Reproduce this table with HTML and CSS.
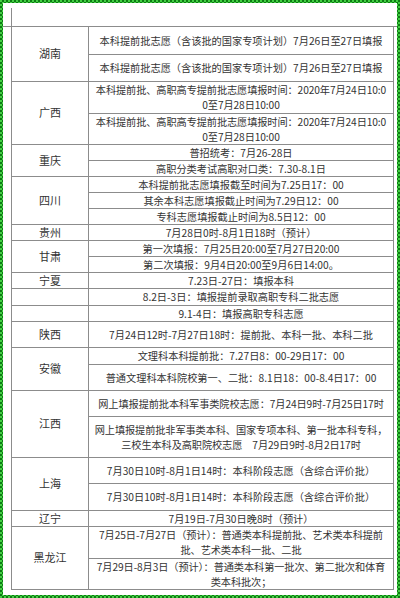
FILE: index.html
```html
<!DOCTYPE html>
<html lang="zh-CN">
<head>
<meta charset="utf-8">
<title>2020各省志愿填报时间</title>
<link rel="stylesheet" href="styles.css">
</head>
<body>
<div class="frame">
  <div class="page">
    <div class="stub"></div>
    <div class="rule"></div>
    <table class="grid">
      <colgroup><col class="c1"><col class="c2"></colgroup>
      <tbody>
        <tr class="h27"><td rowspan="2" class="prov">湖南</td><td>本科提前批志愿（含该批的国家专项计划）7月26日至27日填报</td></tr>
        <tr class="h27"><td>本科提前批志愿（含该批的国家专项计划）7月26日至27日填报</td></tr>
        <tr class="h32"><td rowspan="2" class="prov">广西</td><td class="nw">本科提前批、高职高专提前批志愿填报时间：2020年7月24日10:0<br>0至7月28日10:00</td></tr>
        <tr class="h31"><td class="nw">本科提前批、高职高专提前批志愿填报时间：2020年7月24日10:0<br>0至7月28日10:00</td></tr>
        <tr class="h16"><td rowspan="2" class="prov">重庆</td><td>普招统考：7月26-28日</td></tr>
        <tr class="h16"><td>高职分类考试高职对口类：7.30-8.1日</td></tr>
        <tr class="h16"><td rowspan="3" class="prov">四川</td><td>本科提前批志愿填报截至时间为7.25日17：00</td></tr>
        <tr class="h16"><td>其余本科志愿填报截止时间为7.29日12：00</td></tr>
        <tr class="h16"><td>专科志愿填报截止时间为8.5日12：00</td></tr>
        <tr class="h16"><td class="prov">贵州</td><td>7月28日0时-8月1日18时（预计）</td></tr>
        <tr class="h16"><td rowspan="2" class="prov">甘肃</td><td>第一次填报：7月25日20:00至7月27日20:00</td></tr>
        <tr class="h16"><td>第二次填报：9月4日20:00至9月6日14:00。</td></tr>
        <tr class="h16"><td class="prov">宁夏</td><td>7.23日-27日：填报本科</td></tr>
        <tr class="h17"><td class="prov"></td><td>8.2日-3日：填报提前录取高职专科二批志愿</td></tr>
        <tr class="h16"><td class="prov"></td><td>9.1-4日：填报高职专科志愿</td></tr>
        <tr class="h26"><td class="prov">陕西</td><td>7月24日12时-7月27日18时：提前批、本科一批、本科二批</td></tr>
        <tr class="h17"><td rowspan="2" class="prov">安徽</td><td>文理科本科提前批：7.27日8：00-29日17：00</td></tr>
        <tr class="h26"><td>普通文理科本科院校第一、二批：8.1日18：00-8.4日17：00</td></tr>
        <tr class="h26"><td rowspan="2" class="prov">江西</td><td class="nw">网上填报提前批本科军事类院校志愿：7月24日9时-7月25日17时</td></tr>
        <tr class="h41"><td class="nw">网上填报提前批非军事类本科、国家专项本科、第一批本科专科，<br>三校生本科及高职院校志愿　7月29日9时-8月2日17时</td></tr>
        <tr class="h26"><td rowspan="2" class="prov">上海</td><td>7月30日10时-8月1日14时：本科阶段志愿（含综合评价批）</td></tr>
        <tr class="h27"><td>7月30日10时-8月1日14时：本科阶段志愿（含综合评价批）</td></tr>
        <tr class="h16"><td class="prov">辽宁</td><td>7月19日-7月30日晚8时（预计）</td></tr>
        <tr class="h32"><td rowspan="2" class="prov">黑龙江</td><td class="nw">7月25日-7月27日（预计）：普通类本科提前批、艺术类本科提前<br>批、艺术类本科一批、二批</td></tr>
        <tr class="h31"><td class="nw">7月29日-8月3日（预计）：普通类本科第一批次、第二批次和体育<br>类本科批次；</td></tr>
      </tbody>
    </table>
  </div>
</div>
</body>
</html>
```
FILE: styles.css
```css
html, body {
  margin: 0;
  padding: 0;
  background: #ffffff;
}

.frame {
  width: 400px;
  height: 598px;
  box-sizing: border-box;
  padding: 3px;
  background: repeating-conic-gradient(#0d7a14 0 25%, #43d043 0 50%) 0 0 / 4px 4px;
  overflow: hidden;
}

.page {
  height: 100%;
  background: #ffffff;
  padding-top: 5px;
  box-sizing: border-box;
  font-family: "Noto Sans CJK SC", "Noto Sans", sans-serif;
  font-size: 10.2px;
  color: #333333;
}

.stub {
  margin-left: 8px;
  height: 18px;
  border-left: 1px solid #8c8c8c;
}

.rule {
  height: 1px;
  background: #8c8c8c;
}

.grid {
  margin-left: 8px;
  width: 382px;
  border-collapse: collapse;
  table-layout: fixed;
}

.c1 { width: 77px; }
.c2 { width: 305px; }

.grid td {
  border: 1px solid #8c8c8c;
  padding: 0 1px;
  line-height: 15px;
  text-align: center;
  vertical-align: middle;
  word-break: break-all;
  overflow: hidden;
}

.grid td.nw {
  white-space: nowrap;
  letter-spacing: -0.1px;
}

.grid tr:first-child td {
  border-top: none;
}

.prov {
  font-size: 11px;
}

.h16 { height: 16px; }
.h17 { height: 17px; }
.h26 { height: 26px; }
.h27 { height: 27px; }
.h31 { height: 31px; }
.h32 { height: 32px; }
.h41 { height: 41px; }
```
